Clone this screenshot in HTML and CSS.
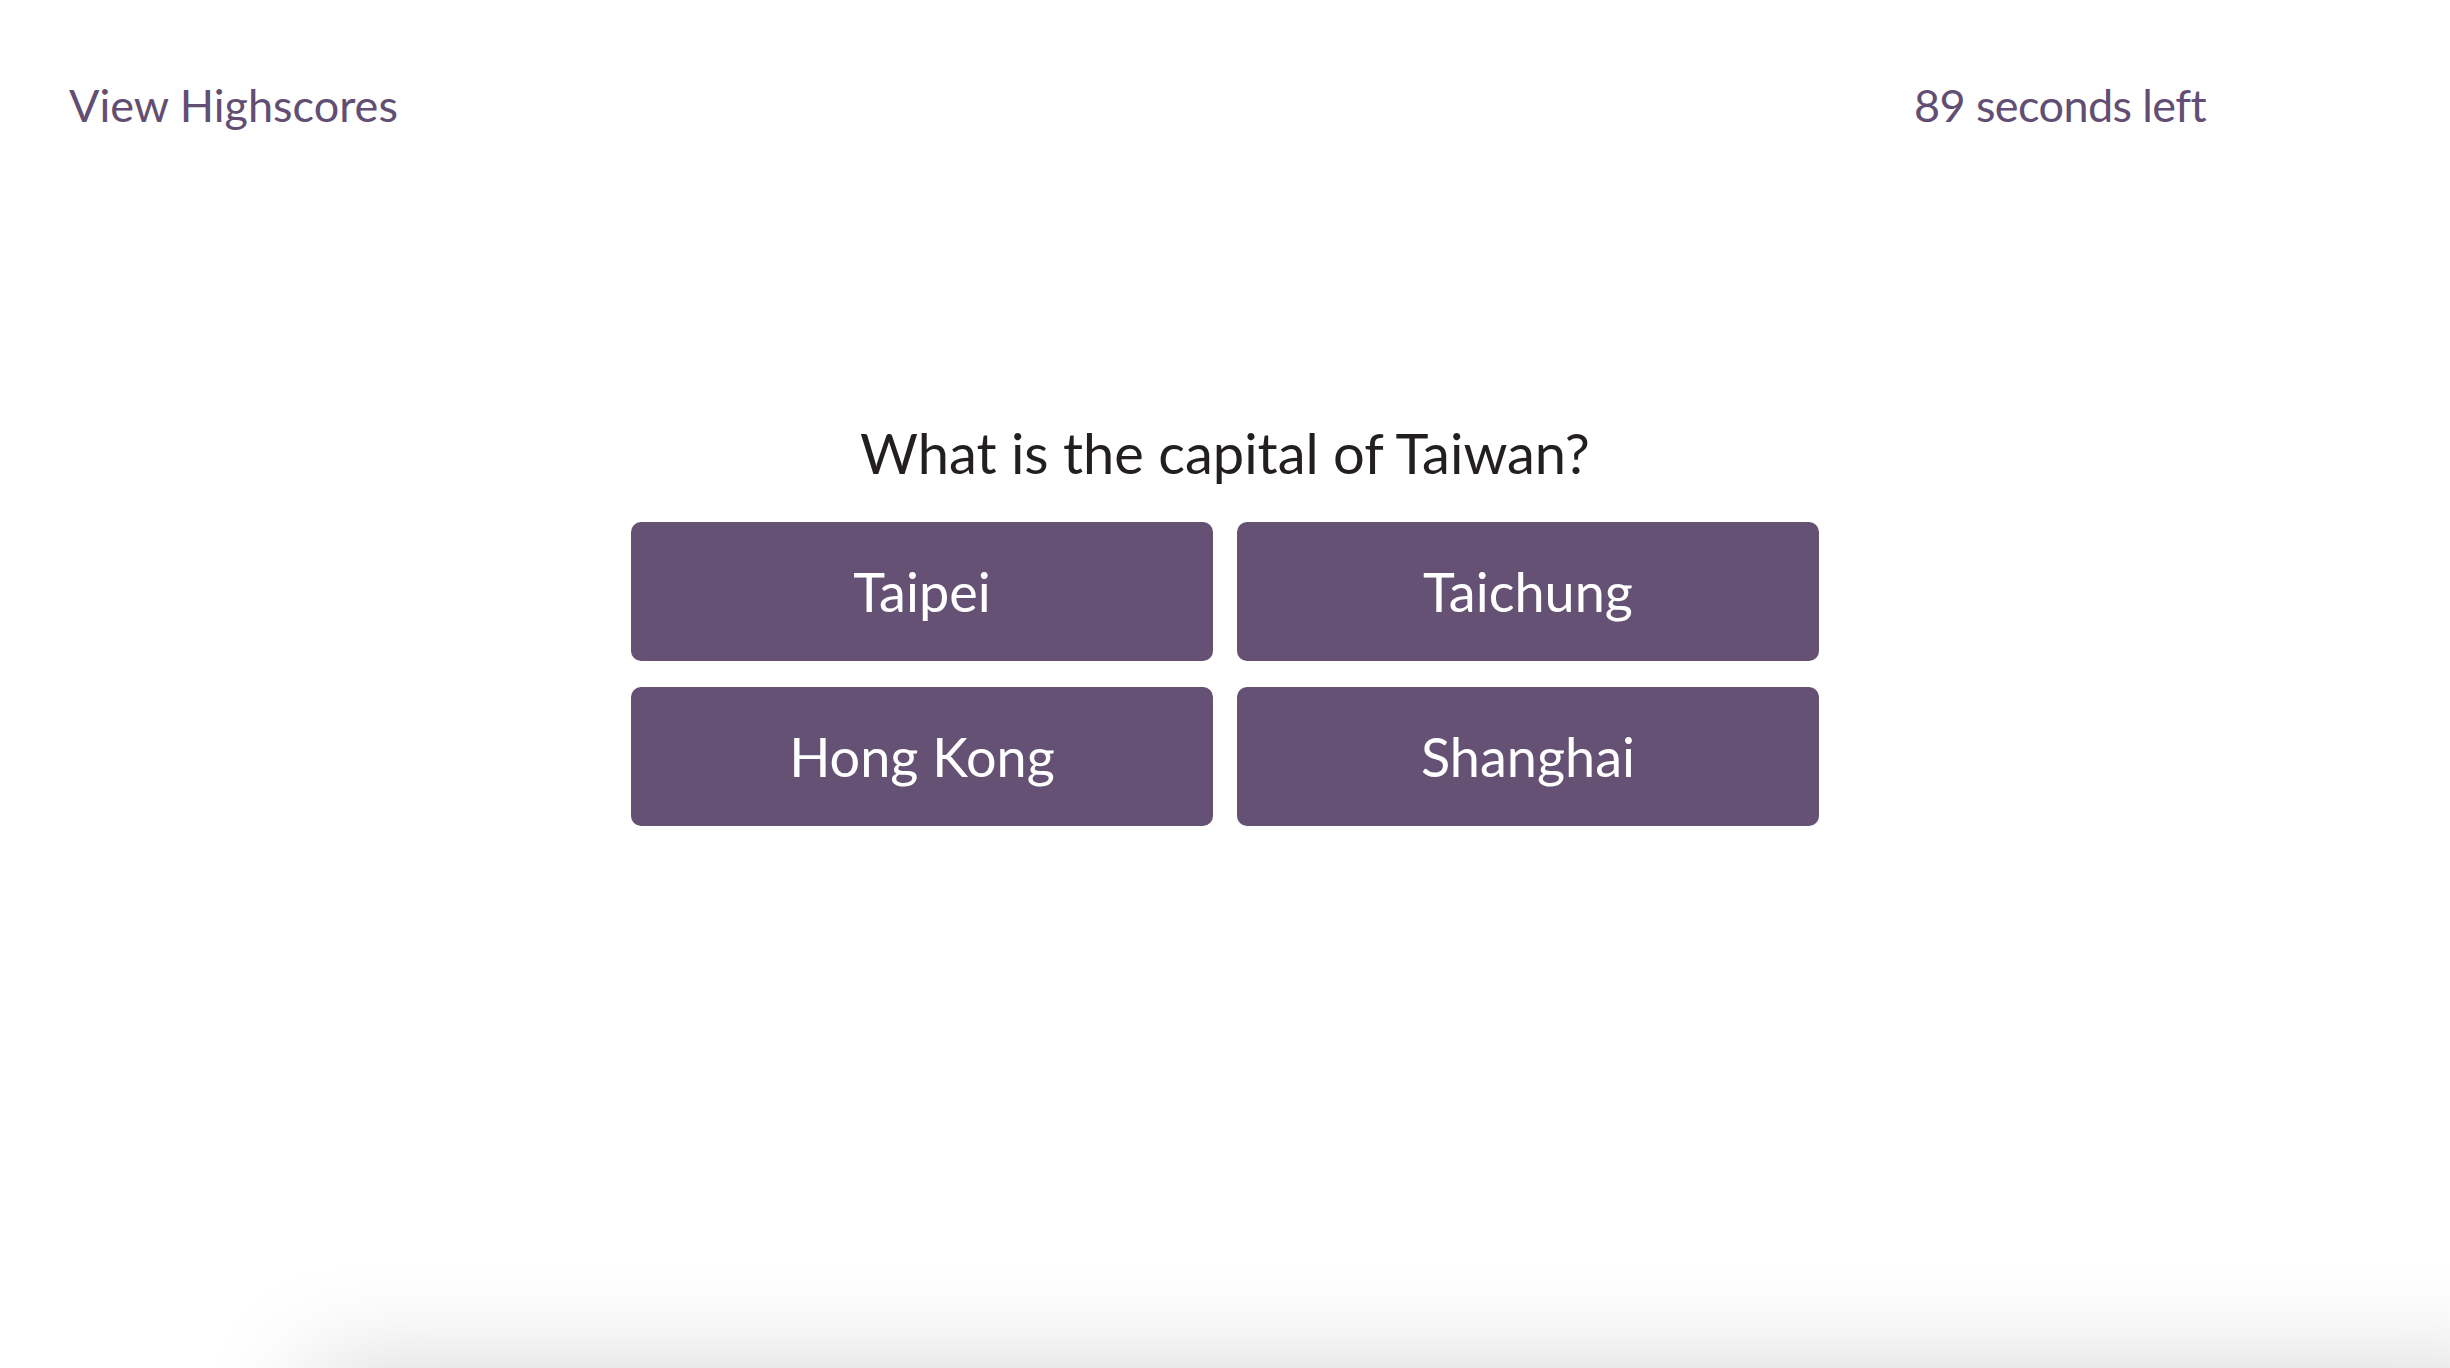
FILE: index.html
```html
<!DOCTYPE html>
<html lang="en">
<head>
<meta charset="utf-8">
<title>Quiz</title>
<link rel="stylesheet" href="styles.css">
</head>
<body>
  <header class="top-bar">
    <a class="highscores-link" href="#">View Highscores</a>
    <div class="timer">89 seconds left</div>
  </header>
  <main class="quiz">
    <h1 class="question">What is the capital of Taiwan?</h1>
    <div class="choices">
      <button class="choice">Taipei</button>
      <button class="choice">Taichung</button>
      <button class="choice">Hong Kong</button>
      <button class="choice">Shanghai</button>
    </div>
  </main>
  <div class="window-shadow"></div>
</body>
</html>
```

FILE: styles.css
```css
html, body {
  margin: 0;
  padding: 0;
  background: #ffffff;
  height: 100%;
  overflow: hidden;
}

body {
  font-family: "Lato", "Open Sans", sans-serif;
  position: relative;
}

.top-bar {
  display: flex;
  justify-content: space-between;
  align-items: flex-start;
  padding: 83px 244px 0 69px;
}

.highscores-link,
.timer {
  font-size: 45px;
  line-height: 1;
  color: #624e73;
  text-decoration: none;
}

.timer {
  letter-spacing: -0.6px;
}

.quiz {
  display: flex;
  flex-direction: column;
  align-items: center;
  margin-top: 297px;
}

.question {
  margin: 0;
  font-size: 56px;
  line-height: 1;
  font-weight: 400;
  color: #231f20;
}

.choices {
  margin-top: 41px;
  display: grid;
  grid-template-columns: 582px 582px;
  column-gap: 24px;
  row-gap: 26px;
}

.choice {
  height: 139px;
  border: none;
  border-radius: 10px;
  background: #645174;
  color: #ffffff;
  font-family: "Lato", "Open Sans", sans-serif;
  font-size: 54px;
  line-height: 1;
  display: flex;
  align-items: center;
  justify-content: center;
  padding: 0;
  cursor: pointer;
}

.window-shadow {
  position: absolute;
  left: 380px;
  right: 0;
  bottom: 0;
  height: 0;
  box-shadow: 0 70px 110px 70px rgba(0, 0, 0, 0.17);
}
```
